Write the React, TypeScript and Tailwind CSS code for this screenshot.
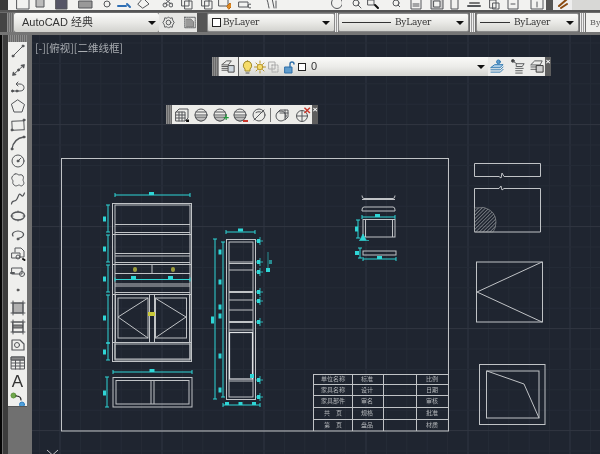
import React from "react";

const W = "#c0c3c6";
const C = "#2fd6d6";

function Ic({ w = 16, h = 16, vb = "0 0 16 16", c = "#55575a", sw = 1, children, cls = "" }: { w?: number; h?: number; vb?: string; c?: string; sw?: number; children: React.ReactNode; cls?: string }) {
  return (
    <svg width={w} height={h} viewBox={vb} fill="none" stroke={c} strokeWidth={sw} strokeLinecap="round" strokeLinejoin="round" className={`shrink-0 ${cls}`}>
      {children}
    </svg>
  );
}

const side: React.ReactNode[] = [
  <><path d="M3 13 13 3" /><circle cx="3" cy="13" r="1" fill="#444" /><circle cx="13" cy="3" r="1" fill="#444" /></>,
  <><path d="M3 13 14 3" /><path d="M3 13l2.500-.5M3 13l.5-2.500M14 3l-2.500.5M14 3l-.5 2.500" strokeWidth="1.600" /><circle cx="8.500" cy="8" r="1" fill="#444" /></>,
  <><path d="M2 11h8c3 0 4-1.500 4-3.500S12 4 10 4H7" /><path d="M8 2 6 4l2 2" /><circle cx="2.500" cy="11" r="1" fill="#444" /><circle cx="7" cy="11" r="1" fill="#444" /></>,
  <path d="M8 2 14.500 6.500 12 14H4L1.500 6.500Z" />,
  <><path d="M2 4h12v9H2Z" transform="rotate(-3 8 8)" /><circle cx="2" cy="13" r="1" fill="#444" /><circle cx="14" cy="3" r="1" fill="#444" /></>,
  <><path d="M2 14C3 7 7 3 14 2" strokeWidth="1.300" /><circle cx="2" cy="14" r="1" fill="#444" /><circle cx="14" cy="2" r="1" fill="#444" /></>,
  <><circle cx="8" cy="8" r="6" /><path d="M8 8l3-3" /><circle cx="8" cy="8" r="1" fill="#444" /></>,
  <path d="M5 2c2-1 3 1 4 1s3-1 4 1 0 3 0 4 2 3 0 5-3 0-4 0-3 2-5 0-1-3-1-4-2-2-1-4 2-2 3-3Z" />,
  <path d="M1.500 14C2 9 5 13 7 9S9 3 11 5s2 1 3.500-2" strokeWidth="1.200" />,
  <><ellipse cx="8" cy="8" rx="6.500" ry="4" strokeWidth="1.300" /><path d="M1 8h2M13 8h2M8 3v1M8 12v1" /></>,
  <><path d="M3 9C1 6 5 4 8 4s7 2 5 5c-1 1.500-3 2-4 2" strokeWidth="1.200" /><circle cx="8" cy="12" r="1" fill="#444" /></>,
  <><path d="M5 7V3h6l3 3v6h-3" /><path d="M2 8h8v5H2Z" /><circle cx="8" cy="12" r="2" /><path d="M13 14l1.500 1" strokeWidth="2" stroke="#111" /></>,
  <><path d="M2 5h10v6H2Z" /><path d="M1 10h3" strokeWidth="2" /><circle cx="12" cy="11" r="2.500" /></>,
  <circle cx="8" cy="8" r="1" fill="#555" stroke="#555" />,
  <><rect x="3" y="3" width="10" height="10" fill="#b0b0b0" strokeDasharray="1 .6" /><path d="M1 3h14M1 13h14M3 1v14M13 1v14" /></>,
  <><rect x="3" y="3" width="10" height="10" /><path d="M3.500 6h9v3h-9Z" fill="#888" /><path d="M1 3h14M1 13h14M3 1v14M13 1v14" /></>,
  <><path d="M2 3h8l4 4v6H2Z" strokeWidth="1.200" /><circle cx="7" cy="8" r="2.500" /></>,
  <><rect x="1.500" y="2" width="13" height="12" /><path d="M1.500 5h13M1.500 8h13M1.500 11h13M5.500 5v9M10 5v9" /><path d="M1.500 2h13v3h-13Z" fill="#888" /></>,
  <></>,
  <><circle cx="3.500" cy="3.500" r="2.500" fill="#6fa84a" stroke="#5f9440" /><circle cx="12" cy="12.500" r="2.500" fill="#4fa0dc" stroke="#2f7fc0" /><path d="M6 4c3 0 5 1 5 4" stroke="#222" strokeWidth="1.200" /></>,
];

const top: [number, number, React.ReactNode][] = [
  [16, 14, <path d="M1 1h12v12H1Z" />],
  [5, 10, <path d="M1 1v10h8V1Z" fill="#bbb" />],
  [10, 13, <path d="M1 1h11v12H1Z" fill="#556" />],
  [10, 15, <><path d="M1 5h13v7H1Z" fill="#999" /></>],
  [10, 8, <circle cx="4" cy="8" r="3" />],
  [6, 15, <><path d="M1 10h8" stroke="#2f6fb5" strokeWidth="2" /><path d="M10 8l3 3" stroke="#2f6fb5" strokeWidth="2" /></>],
  [5, 13, <path d="M1 8l5-6 6 6-6 4Z" />],
  [12, 11, <><circle cx="3" cy="9" r="2" /><circle cx="9" cy="9" r="2" /><path d="M3 3l6 5M9 3 3 8" /></>],
  [7, 13, <path d="M2 2h7v8H2ZM5 5h7v8H5Z" />],
  [7, 13, <path d="M2 2h7v8H2ZM5 5h7v8H5Z" />],
  [5, 13, <><path d="M1 2h9v8H1Z" /><path d="M9 10l3-3 2 3-3 3Z" fill="#e08a1e" stroke="#c06a10" /></>],
  [7, 13, <><path d="M1 6h9v5H1Z" /><circle cx="12" cy="10" r="2" /></>],
  [13, 14, <path d="M2 2c2 2 2 6 3 10M8 2c1 3 1 7 2 10M12 5v7" />],
  [32, 14, <path d="M0 0" />],
  [6, 12, <circle cx="7" cy="7" r="5.500" />],
  [10, 10, <><circle cx="4" cy="7" r="3" /><path d="M6 9l3 3" /></>],
  [5, 13, <><rect x="1" y="4" width="6" height="5" /><path d="M8 9l3 3" stroke="#111" strokeWidth="2" /></>],
  [12, 8, <><circle cx="4" cy="7" r="3" /><path d="M6 9l2 2" /></>],
  [10, 12, <path d="M1 1v12h10V1ZM3 8h6M3 10h6" />],
  [8, 14, <path d="M1 1v12h12V1ZM4 5h6v6H4Z" fill="#ccc" />],
  [6, 9, <path d="M1 1v12h7V1Z" />],
  [8, 15, <><path d="M3 7h9" strokeWidth="2" stroke="#777" /><path d="M1 10h12" strokeWidth="2" /></>],
  [7, 11, <path d="M1 4h6v8H1ZM4 7h6v6H4Z" />],
  [7, 12, <path d="M1 1v12h10V1ZM4 8h4" />],
  [11, 14, <path d="M1 1v12h12V1ZM7 6v5" />],
];

function Tri() {
  return <span className="w-0 h-0 border-l-[4px] border-r-[4px] border-t-[4px] border-l-transparent border-r-transparent border-t-[#111] shrink-0" />;
}

function Grip({ cls = "" }: { cls?: string }) {
  return <div className={`shrink-0 bg-[repeating-linear-gradient(90deg,#8d8d8d_0px,#8d8d8d_1px,#6a6a6a_1px,#6a6a6a_2px)] ${cls}`} />;
}

function Combo({ cls, line, text, check, lineW = 49 }: { cls: string; line?: boolean; text: string; check?: boolean; lineW?: number }) {
  return (
    <div className={`h-[19px] flex items-center pr-[4px] shrink-0 border border-[#8a8a8a] rounded-[2px] bg-[linear-gradient(#fbfbf9,#e9e9e6_50%,#d3d3cf)] ${cls}`}>
      {check && <span className="w-[9px] h-[9px] border border-[#222] bg-white ml-[4px] mr-[2px] shrink-0" />}
      {line && <span className="h-px bg-[#333] ml-[3px] mr-[4px] shrink-0" style={{ width: lineW }} />}
      <span className="font-['DejaVu_Serif',serif] text-[9px] tracking-[-0.25px] text-[#333] leading-none">{text}</span>
      <span className="flex-1" />
      <Tri />
    </div>
  );
}

function Sep({ cls }: { cls: string }) {
  return <div className={`h-[19px] shrink-0 bg-[repeating-linear-gradient(90deg,#eeeeee_0px,#eeeeee_1px,#9a9a9a_1px,#9a9a9a_2px)] ${cls}`} />;
}

function Close() {
  return <span className="text-white text-[8px] leading-none font-bold font-['Liberation_Sans',sans-serif]">×</span>;
}

function VDim({ x, y1, y2, blocks, bx, bw = 3, bh = 5 }: { x: number; y1: number; y2: number; blocks?: number[]; bx?: number; bw?: number; bh?: number }) {
  return (
    <g>
      <path d={`M${x} ${y1}V${y2}M${x - 2} ${y1}H${x + 2}M${x - 2} ${y2}H${x + 2}`} stroke={C} fill="none" strokeWidth="1" />
      {blocks?.map((b) => <rect key={b} x={bx} y={b - bh / 2} width={bw} height={bh} fill={C} />)}
    </g>
  );
}

function HDim({ y, x1, x2, blocks, by, bw = 5, bh = 3 }: { y: number; x1: number; x2: number; blocks?: number[]; by?: number; bw?: number; bh?: number }) {
  return (
    <g>
      <path d={`M${x1} ${y}H${x2}M${x1} ${y - 2}V${y + 2}M${x2} ${y - 2}V${y + 2}`} stroke={C} fill="none" strokeWidth="1" />
      {blocks?.map((b) => <rect key={b} x={b - bw / 2} y={by} width={bw} height={bh} fill={C} />)}
    </g>
  );
}

const rows = [
  ["单位名称", "标准", "比例", 381],
  ["家具名称", "设计", "日期", 392],
  ["家具部件", "审名", "审核", 403],
  ["共　页", "规格", "批准", 415],
  ["第　页", "盘品", "材质", 427],
] as const;

function Drawing() {
  const xs: number[] = [];
  for (let x = 39.6; x < 600; x += 20.4) xs.push(x);
  const ys: number[] = [];
  for (let y = 43; y < 454; y += 20.4) ys.push(y);
  return (
    <svg viewBox="32 35 568 419" width="568" height="419" className="block">
      <defs>
        <pattern id="hatch" width="2.500" height="2.500" patternUnits="userSpaceOnUse" patternTransform="rotate(45)">
          <path d="M0 0V2.500" stroke="#b4b7ba" strokeWidth="1" />
        </pattern>
      </defs>
      <rect x="32" y="35" width="568" height="419" fill="#1f2530" />
      {xs.map((x, i) => <path key={x} d={`M${x} 35V454`} stroke={(i + 4) % 5 === 0 ? "#313742" : "#262c37"} strokeWidth="1" />)}
      {ys.map((y, i) => <path key={y} d={`M32 ${y}H600`} stroke={(i + 1) % 5 === 0 ? "#313742" : "#262c37"} strokeWidth="1" />)}

      <g fill="none" stroke={W} strokeWidth="1">
        <rect x="61.500" y="158.500" width="387" height="272.500" />
        {/* title block */}
        <path d="M313.500 374V431M352.500 374V431M383.500 374V431M416.500 374V431M313 374.500H449M313 384.500H449M313 395.500H449M313 407.500H449M313 419.500H449" />

        {/* front elevation */}
        <rect x="112.500" y="203.500" width="79" height="158" />
        <rect x="115" y="205" width="75" height="155" />
        <path d="M115 224.500H190M115 232.500H190M112 234.500H192M115 253.500H190M115 256H190M115 262.500H190M112 264.500H192M115 273.500H190M115 284H190M115 286H190M115 292.500H190M112 294.500H192M112 342.500H192" />
        <path d="M152 264V273" />
        <rect x="118" y="298" width="30" height="40" />
        <rect x="155.500" y="298" width="31" height="40" />
        <path d="M115.500 295V342M149.500 295V342M154.500 295V342M189.500 295V342" />
        <path d="M148 298 118 317 148 338M155 298 186 317 155 338" />
        <rect x="115" y="344" width="75" height="15" />

        {/* plan */}
        <rect x="113" y="377.500" width="79" height="29.500" />
        <rect x="116" y="380.500" width="73" height="23.500" />
        <path d="M151 380V404M154 380V404" />

        {/* side */}
        <rect x="226.500" y="239.500" width="29" height="160" />
        <rect x="229" y="242" width="24" height="155" />
        <path d="M229 262H253M229 270H253M229 291.500H253M229 300H253M229 310H253M229 321.500H253M229 330H253" strokeWidth="1" />
        <path d="M229 263.500H253M229 292.500H253M229 322.500H253" strokeWidth="1" />
        <rect x="229.500" y="332.500" width="23" height="46.500" stroke="#e0e2e4" strokeWidth="1.200" />
        <path d="M229 381H253" />

        {/* detail */}
        <path d="M362 195.500q0 3 2 3H393q2 0 2-3M362 199.500H395M362 210q0-3 2-3H393q2 0 2 3V211H362Z" />
        <rect x="363" y="219.500" width="32" height="17.500" />
        <path d="M365.500 220V237M392.500 220V237" />
        <rect x="363" y="251" width="33" height="4" />

        {/* right drawings */}
        <path d="M474.500 163.500H540.500V176.500H504L502 173 501 178 499 176.500H474.500Z" />
        <path d="M474.500 188.500H499L501 186 502 190 504 188.500H540.500V232H474.500Z" />
        <path d="M474.500 208 L484 207.500Q496 211 496 222Q496 228 493 232H474.500Z" fill="url(#hatch)" stroke="#9a9da0" strokeWidth="0.6" />
        <rect x="476.500" y="262" width="66" height="60" />
        <path d="M542 262 477 292 542 322" />
        <rect x="479.500" y="364.500" width="65.500" height="60" />
        <rect x="486.500" y="371" width="52.500" height="47" />
        <path d="M487 371 524 384 539 418" />
        <path d="M47 450 52.500 455M58 450 52.500 455" />
      </g>

      <g fontFamily="'Noto Sans CJK SC',sans-serif" fontSize="6" fill="#b4b7ba" textAnchor="middle">
        {rows.map((r) => (
          <g key={r[0]}>
            <text x="333" y={r[3]}>{r[0]}</text>
            <text x="367" y={r[3]}>{r[1]}</text>
            <text x="432" y={r[3]}>{r[2]}</text>
          </g>
        ))}
      </g>

      {/* front dims */}
      <HDim y={195} x1={115} x2={190} blocks={[151.500]} by={192} />
      <VDim x={108} y1={205} y2={232} blocks={[219]} bx={103} />
      <VDim x={108} y1={235} y2={262} blocks={[249]} bx={103} />
      <VDim x={108} y1={265} y2={292} blocks={[279]} bx={103} />
      <VDim x={108} y1={295} y2={343} blocks={[318]} bx={103} />
      <VDim x={108} y1={343} y2={360} blocks={[352]} bx={103} />
      <HDim y={279.500} x1={115} x2={190} blocks={[133.500, 170.500]} by={276} />
      <HDim y={372} x1={113} x2={192} blocks={[152]} by={369} />
      <VDim x={107} y1={377} y2={407} blocks={[393]} bx={103} />
      <rect x="133" y="267" width="4" height="5" rx="2" fill="#9a9a3a" />
      <rect x="171" y="267" width="4" height="5" rx="2" fill="#9a9a3a" />
      <rect x="148" y="312" width="7" height="4" fill="#c9c93a" />

      {/* side dims */}
      <HDim y={232} x1={226} x2={255} blocks={[240.500]} by={228.500} />
      <VDim x={215} y1={239} y2={399} blocks={[320]} bx={211} bh={7} />
      <VDim x={223} y1={242} y2={397} blocks={[252, 282, 307, 316, 356, 390]} bx={218.500} />
      {[241, 262, 272, 292, 301, 322, 380, 397].map((y) => (
        <g key={y}>
          <path d={`M256 ${y}H263M260 ${y - 4}V${y + 4}`} stroke={C} strokeWidth="0.8" />
          <rect x="257" y={y - 2} width="3" height="4" fill={C} />
        </g>
      ))}
      <path d="M268 252V270" stroke={C} strokeWidth="0.6" />
      <rect x="266" y="268" width="4" height="4" fill={C} />
      <rect x="269" y="260" width="3" height="4" fill={C} opacity="0.6" />
      <HDim y={405} x1={223} x2={260} blocks={[227, 240.500, 254]} by={402} bw={4} />
      <rect x="250" y="374" width="4" height="4" fill={C} />

      {/* detail dims */}
      <HDim y={217} x1={362} x2={395} blocks={[377.500]} by={214} />
      <VDim x={358} y1={220} y2={238} blocks={[229]} bx={355} />
      <path d="M359 240.500H369M363 234 366 240H360Z" stroke={C} fill={C} strokeWidth="0.7" />
      <VDim x={360} y1={248} y2={258} blocks={[253]} bx={355} bw={4} bh={4} />
      <HDim y={259} x1={363} x2={396} blocks={[379.500]} by={256} />
    </svg>
  );
}

const LBL = "font-['Liberation_Sans','Noto_Sans_CJK_SC',sans-serif]";

export default function App() {
  return (
    <div className="relative w-[600px] h-[454px] overflow-hidden bg-[#6c6c6c] flex flex-col blur-[0.4px]">
      {/* standard toolbar */}
      <div className="h-[10px] flex items-end overflow-hidden shrink-0 bg-[linear-gradient(90deg,#3a3a3a_0px,#3a3a3a_8px,#f2f2f0_8px,#f2f2f0_546px,#555555_546px,#555555_553px,#eeeeee_553px,#eeeeee_572px,#d8d8d6_572px)]">
        {top.map(([ml, w, el], i) => (
          <div key={i} className="shrink-0" style={{ marginLeft: ml }}>
            <Ic w={w} h={14} vb={`0 0 ${w} 14`}>{el}</Ic>
          </div>
        ))}
        <div className="ml-[13px] shrink-0">
          <Ic w={15} h={14} vb="0 0 15 14" c="#8a4a10" sw={2}><path d="M2 10 9 4l3-3M4 12l6-4" /></Ic>
        </div>
      </div>
      <div className="h-[2px] bg-[#555555] shrink-0" />

      {/* properties toolbar */}
      <div className="h-[19px] mt-px flex items-center shrink-0 pl-[7px] bg-[linear-gradient(90deg,#444444_0px,#444444_7px,#6c6c6c_7px)]">
        <Grip cls="w-[7px] h-[19px]" />
        <div className={`w-[145px] h-[19px] flex items-center pl-[8px] pr-[3px] shrink-0 rounded-[2px] bg-[linear-gradient(#fafaf8,#e9e9e6_50%,#d2d2ce)] ${LBL} text-[11px] text-[#333]`}>
          <span className="leading-none">AutoCAD 经典</span>
          <span className="flex-1" />
          <Tri />
        </div>
        <div className="w-[38px] h-[19px] flex items-center gap-[7px] pl-[2px] bg-[#e6e6e4] shrink-0">
          <Ic w={15} h={15}><circle cx="8" cy="8" r="2.500" /><path d="M8 2l1.500 1.500 2.500-.5.5 2.500L14 8l-1.500 2.500-.5 2.500-2.500-.5L8 14l-1.500-1.500-2.500.5-.5-2.500L2 8l1.500-2.500.5-2.500 2.500.5Z" strokeDasharray="2 .7" /></Ic>
          <Ic w={14} h={15}><rect x="2" y="2" width="12" height="12" strokeDasharray="1.500 1" /><path d="M4 4h5l3 3v6H4Z" fill="#999" stroke="#777" /></Ic>
        </div>
        <div className="w-[10px] h-[19px] bg-[#555555] shrink-0" />
        <Combo cls="w-[128px]" text="ByLayer" check />
        <Sep cls="w-[3px]" />
        <Combo cls="w-[131px]" text="ByLayer" line />
        <Sep cls="w-[5px] mx-px" />
        <Combo cls="w-[103px]" text="ByLayer" line lineW={30} />
        <Sep cls="w-[5px] mx-px" />
        <div className="h-[19px] flex-1 pl-[4px] flex items-center bg-[#f0f0ee] font-['DejaVu_Serif',serif] text-[8px] text-[#666]">By</div>
      </div>
      <div className="h-[3px] shrink-0 bg-[#757575]" />

      <div className="flex-1 flex min-h-0">
        {/* left rail */}
        <div className="w-[32px] shrink-0 flex bg-[#707070]">
          <div className="w-[8px] shrink-0 bg-[linear-gradient(90deg,#060606_0px,#060606_2px,#6e6e6e_2px,#6e6e6e_3px,#3c3c3c_3px)]" />
          <div className="w-[19px] shrink-0 flex flex-col">
            <Grip cls="w-[19px] h-[7px]" />
            <div className="h-[365px] overflow-hidden bg-[#efefed] border-b border-[#555] flex flex-col items-center">
              {side.map((ic, i) => (
                <div key={i} className="h-[18.37px] w-full flex items-center justify-center shrink-0">
                  {i === 18 ? (
                    <span className={`${LBL} text-[17px] leading-none text-[#333]`}>A</span>
                  ) : (
                    <Ic w={16} h={16}>{ic}</Ic>
                  )}
                </div>
              ))}
            </div>
          </div>
        </div>

        {/* model space */}
        <div className="flex-1 min-w-0 relative">
          <Drawing />
          <div className="absolute left-[3px] top-[7px] font-['Noto_Sans_CJK_SC',sans-serif] text-[10.5px] leading-[12px] text-[#a9adb2]">[-][俯视][二维线框]</div>
        </div>
      </div>

      {/* layer toolbar */}
      <div className="absolute left-[212px] top-[57px] w-[339px] h-[19px] flex bg-[#5e5e5e]">
        <Grip cls="w-[7px] h-full" />
        <div className="w-[19px] h-full flex items-center justify-center bg-[#ececea]">
          <Ic w={15} h={15} c="#555"><path d="M1 6 6 2h5l-3 4Z" /><path d="M1 8h6M1 10h6M1 12h6" /><rect x="8" y="7" width="6" height="7" fill="#cfd8e0" stroke="#444" /></Ic>
        </div>
        <div className="w-[249px] ml-px h-full flex items-center pl-[3px] pr-[3px] bg-[linear-gradient(#fafaf8,#ecece9_50%,#d4d4d0)]">
          <Ic w={11} h={14} vb="0 0 11 14" c="#a08a2a"><path d="M5.500 1a4.500 4.500 0 0 0-2.500 8v2h5V9a4.500 4.500 0 0 0-2.500-8Z" fill="#f6dc6a" /><path d="M4 13h3" stroke="#555" /></Ic>
          <Ic w={12} h={14} vb="0 0 12 14" c="#b8962a" cls="ml-[1px]"><circle cx="6" cy="7" r="2.800" fill="#f6dc6a" /><path d="M6 1v2M6 11v2M0.500 7h2M9.500 7h2M2 3l1.500 1.500M10 3 8.500 4.500M2 11l1.500-1.500M10 11 8.500 9.500" /></Ic>
          <Ic w={12} h={14} vb="0 0 12 14" c="#aaa" cls="ml-[2px]"><path d="M1 2h6v7H1Z" /><path d="M4 5h6v7H4Z" strokeDasharray="1.500 1" /></Ic>
          <Ic w={11} h={14} vb="0 0 11 14" c="#2f6fa8" cls="ml-[4px]"><rect x="1" y="7" width="7" height="6" fill="#5f9ccc" /><path d="M6 7V4a2 2 0 0 1 4 0" strokeWidth="1.400" /></Ic>
          <span className="w-[8px] h-[8px] ml-[3px] border border-[#222] bg-white shrink-0" />
          <span className={`${LBL} ml-[5px] text-[11px] leading-none text-[#333]`}>0</span>
          <span className="flex-1" />
          <Tri />
        </div>
        <div className="w-[57px] h-full flex items-center pl-[2px] gap-[4px] bg-[#ececea]">
          <Ic w={15} h={15} c="#2f78b0"><path d="M1 9 5 6h9l-3 3Z" fill="#a8cbe6" /><path d="M1 11.500h10l3-3M1 14h10l3-3" /><circle cx="9" cy="3" r="2" fill="#5f9ccc" /></Ic>
          <Ic w={15} h={15} cls="ml-[2px]"><path d="M6 5h8l-2 3H6ZM5 10h8M5 12.500h7M5 15h7" /><circle cx="2" cy="2" r="1.500" fill="#333" /><path d="M3 3l3 2" /></Ic>
          <Ic w={15} h={15}><path d="M1 6 5 2h8l-2 4Z" /><path d="M1 8.500h6M1 11h6" /><rect x="7" y="7" width="7" height="7" fill="#cfcfcf" stroke="#333" /></Ic>
        </div>
        <div className="flex-1 h-full flex justify-center pt-[1px]"><Close /></div>
      </div>

      {/* view toolbar */}
      <div className="absolute left-[166px] top-[105px] w-[152px] h-[19px] flex bg-[#5e5e5e]">
        <Grip cls="w-[6px] h-full" />
        <div className="w-[140px] h-full flex items-center pl-[3px] bg-[#ecece9]">
          <Ic w={14} h={15} vb="0 0 14 15"><path d="M1 5h9v9H1ZM1 5l3-3h9v9l-3 3M4 5v9M7 5v9M1 8h9M1 11h9" /><path d="M12 13h2v2h-2Z" fill="#111" stroke="#111" /></Ic>
          <Ic w={14} h={14} vb="0 0 14 14" cls="ml-[5px]"><circle cx="7" cy="7" r="6" /><path d="M1 7h12M2 4h10" /><path d="M1.500 9.500A6 6 0 0 0 12.500 9.500Z" fill="#bbb" /></Ic>
          <span className="relative ml-[5px]"><Ic w={14} h={14} vb="0 0 14 14"><circle cx="7" cy="7" r="6" /><path d="M1 7h12M2 4h10" /><path d="M1.500 9.500A6 6 0 0 0 12.500 9.500Z" fill="#bbb" /></Ic><span className="absolute right-[-2px] bottom-[-1px] text-[#1f9a3a] text-[10px] font-bold leading-none font-['Liberation_Sans',sans-serif]">+</span></span>
          <span className="relative ml-[6px]"><Ic w={14} h={14} vb="0 0 14 14"><circle cx="7" cy="7" r="6" /><path d="M1 7h12M2 4h10" /><path d="M1.500 9.500A6 6 0 0 0 12.500 9.500Z" fill="#bbb" /></Ic><span className="absolute right-[-1px] bottom-[0px] w-[5px] h-[2px] bg-[#c8352a]" /></span>
          <Ic w={14} h={14} vb="0 0 14 14" cls="ml-[5px]"><circle cx="7" cy="7" r="6" /><path d="M2 12 12 2M4 4.500c2-1 4-1 6 0" /></Ic>
          <span className="w-px h-[14px] bg-[#777] ml-[4px] shrink-0" />
          <Ic w={14} h={14} vb="0 0 14 14" cls="ml-[4px]"><circle cx="6" cy="8" r="5" /><path d="M2 5l3-3h8v7l-3 3M10 5h3M10 5V2M5 5h5v5" /></Ic>
          <span className="relative ml-[6px]"><Ic w={14} h={14} vb="0 0 14 14"><circle cx="7" cy="8" r="5.500" /><path d="M2 8h10M7 3v10" /></Ic><span className="absolute right-[-2px] top-[-2px] text-[#c8352a] text-[10px] font-bold leading-none font-['Liberation_Sans',sans-serif]">✕</span></span>
        </div>
        <div className="flex-1 h-full flex justify-center pt-[1px]"><Close /></div>
      </div>
    </div>
  );
}
